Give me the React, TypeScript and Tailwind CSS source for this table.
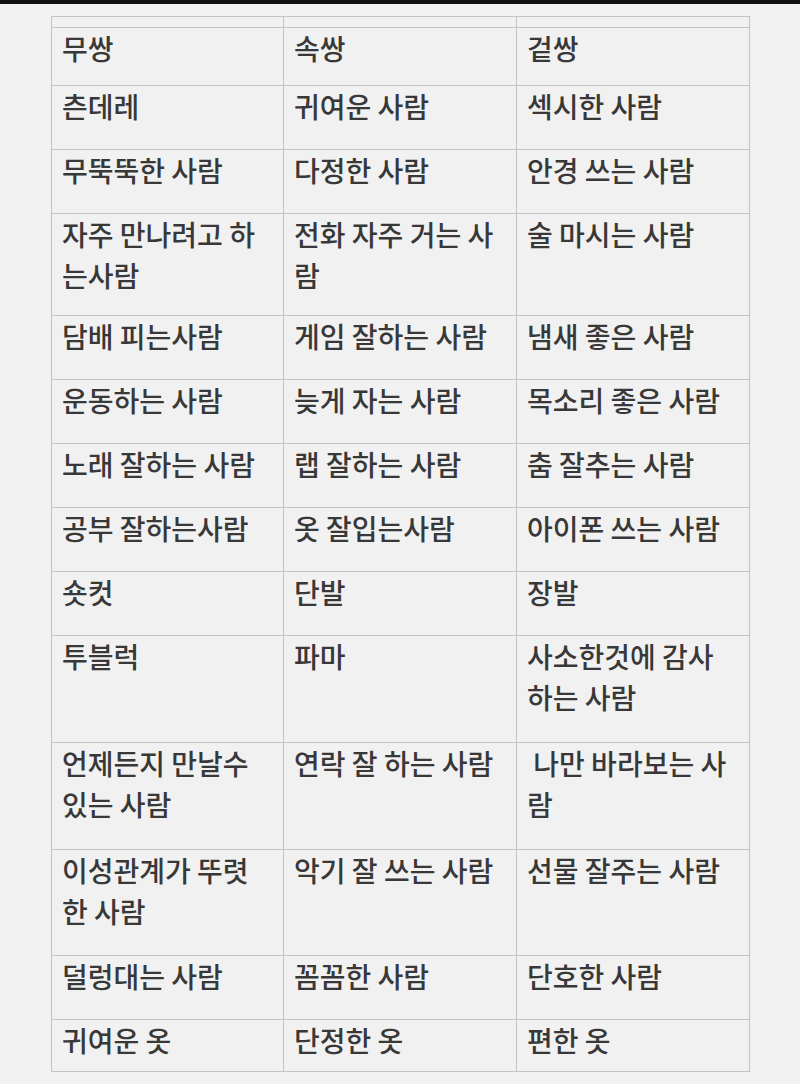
const rows: { h: string; cells: string[][] }[] = [
  { h: 'h-[58px]', cells: [['무쌍'], ['속쌍'], ['겉쌍']] },
  { h: 'h-[64px]', cells: [['츤데레'], ['귀여운 사람'], ['섹시한 사람']] },
  { h: 'h-[64px]', cells: [['무뚝뚝한 사람'], ['다정한 사람'], ['안경 쓰는 사람']] },
  { h: 'h-[102px]', cells: [['자주 만나려고 하', '는사람'], ['전화 자주 거는 사', '람'], ['술 마시는 사람']] },
  { h: 'h-[64px]', cells: [['담배 피는사람'], ['게임 잘하는 사람'], ['냄새 좋은 사람']] },
  { h: 'h-[64px]', cells: [['운동하는 사람'], ['늦게 자는 사람'], ['목소리 좋은 사람']] },
  { h: 'h-[64px]', cells: [['노래 잘하는 사람'], ['랩 잘하는 사람'], ['춤 잘추는 사람']] },
  { h: 'h-[64px]', cells: [['공부 잘하는사람'], ['옷 잘입는사람'], ['아이폰 쓰는 사람']] },
  { h: 'h-[64px]', cells: [['숏컷'], ['단발'], ['장발']] },
  { h: 'h-[107px]', cells: [['투블럭'], ['파마'], ['사소한것에 감사', '하는 사람']] },
  { h: 'h-[107px]', cells: [['언제든지 만날수', '있는 사람'], ['연락 잘 하는 사람'], ['\u00a0나만 바라보는 사', '람']] },
  { h: 'h-[106px]', cells: [['이성관계가 뚜렷', '한 사람'], ['악기 잘 쓰는 사람'], ['선물 잘주는 사람']] },
  { h: 'h-[64px]', cells: [['덜렁대는 사람'], ['꼼꼼한 사람'], ['단호한 사람']] },
  { h: 'h-[52px]', cells: [['귀여운 옷'], ['단정한 옷'], ['편한 옷']] },
];

export default function App() {
  return (
    <div
      className="w-[800px] h-[1084px] bg-[#f1f1f1] text-[#383838] overflow-hidden"
      style={{ fontFamily: '"Noto Sans CJK KR", "Noto Sans", sans-serif' }}
    >
      <div className="h-[4px] bg-[#111111]"></div>
      <div className="pt-[12px] pl-[51px]">
        <table className="border-collapse table-fixed w-[698px]">
          <colgroup>
            <col className="w-[232px]" />
            <col className="w-[233px]" />
            <col className="w-[233px]" />
          </colgroup>
          <tbody>
            <tr className="h-[11px]">
              <td className="border border-[#c4c4c4] p-0"></td>
              <td className="border border-[#c4c4c4] p-0"></td>
              <td className="border border-[#c4c4c4] p-0"></td>
            </tr>
            {rows.map((row, i) => (
              <tr key={i} className={row.h}>
                {row.cells.map((lines, j) => (
                  <td
                    key={j}
                    className="border border-[#c4c4c4] align-top pt-0 px-[10px] text-[28px] font-medium leading-[41px] whitespace-nowrap"
                  >
                    {lines.map((l, k) => (
                      <div key={k}>{l}</div>
                    ))}
                  </td>
                ))}
              </tr>
            ))}
          </tbody>
        </table>
      </div>
    </div>
  );
}
